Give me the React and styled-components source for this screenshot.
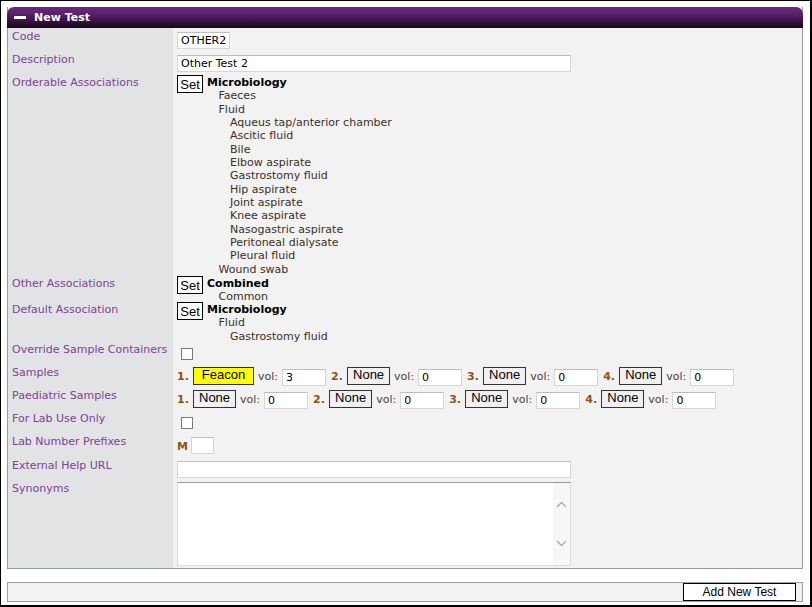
import React from 'react'
import styled, { createGlobalStyle } from 'styled-components'

const GlobalStyle = createGlobalStyle`
  html, body {
    margin: 0;
    padding: 0;
    background: #fff;
  }
  body {
    font-family: "DejaVu Sans", sans-serif;
    font-size: 11px;
  }
`

const Frame = styled.div`
  width: 812px;
  height: 607px;
  box-sizing: border-box;
  border: 1px solid #000;
  border-right-width: 2px;
  border-bottom-width: 2px;
  padding: 6px 7px 0 6px;
  background: #fff;
`

const Panel = styled.div`
  border: 1px solid #9a9a9a;
  border-top: none;
`

const Header = styled.div`
  height: 21px;
  margin: 0 -1px;
  border-radius: 7px 7px 0 0;
  background: linear-gradient(#6a2a7e 0%, #5a1f6a 35%, #35113d 70%, #150716 100%);
  display: flex;
  align-items: center;
  gap: 8px;
  padding-left: 7px;
  color: #fff;
  font-weight: bold;
  font-size: 11px;
`

const Dash = styled.span`
  width: 12px;
  height: 3px;
  background: #fff;
`

const Form = styled.div`
  display: grid;
  grid-template-columns: 165px 1fr;
`

const Label = styled.div`
  background: #e2e3e5;
  color: #7e4199;
  padding: 2px 4px 0 4px;
  line-height: 13.4px;
`

const Value = styled.div`
  background: #f2f2f2;
  padding: ${p => p.$pad || '4px 4px 2px'};
  height: ${p => (p.$h ? `${p.$h}px` : 'auto')};
  box-sizing: border-box;
  position: relative;
  z-index: ${p => (p.$h ? 1 : 0)};
`

const TextInput = styled.div`
  box-sizing: border-box;
  width: ${p => p.$w}px;
  height: 17px;
  background: #fff;
  border: 1px solid #d6d6d6;
  border-top-color: #bdbdbd;
  padding: 0 3px;
  font-size: 11px;
  line-height: 15px;
  color: #000;
  white-space: nowrap;
  overflow: hidden;
`

const AssocWrap = styled.div`
  display: flex;
  align-items: flex-start;
  gap: 4px;
`

const SetButton = styled.button`
  box-sizing: border-box;
  width: 26px;
  height: 18px;
  padding: 0;
  background: #fff;
  border: 1px solid #000;
  font-family: "Liberation Sans", Arial, sans-serif;
  font-size: 13px;
  line-height: 15px;
  color: #000;
`

const Tree = styled.div`
  padding-top: 1px;
  line-height: 13.33px;
`

const Node = styled.div`
  padding-left: ${p => p.$level * 11.5}px;
  font-weight: ${p => (p.$level === 0 ? 'bold' : 'normal')};
  color: ${p => (p.$level === 0 ? '#000' : '#3b3024')};
  white-space: nowrap;
`

const Check = styled.span`
  display: block;
  box-sizing: border-box;
  width: 12px;
  height: 12px;
  margin: 3px 0 0 4px;
  background: #fff;
  border: 1px solid #7a7a7a;
`

const SampleRow = styled.div`
  display: flex;
  align-items: center;
  height: 18px;
`

const Slot = styled.div`
  display: flex;
  align-items: center;
  margin-right: 5px;
`

const Num = styled.span`
  width: 16px;
  color: #8c5510;
  font-weight: bold;
`

const PickButton = styled.button`
  box-sizing: border-box;
  height: 18px;
  padding: 0 5px 2px;
  background: ${p => (p.$filled ? '#ffff00' : '#f0f0f0')};
  border: 1px solid #333;
  font-family: "Liberation Sans", Arial, sans-serif;
  font-size: 13px;
  line-height: 14px;
  color: #000;
  min-width: ${p => (p.$filled ? 61 : 43)}px;
`

const Vol = styled.span`
  margin: 1px 4px 0 4px;
  color: #4a4238;
`

const VolInput = styled(TextInput)`
  margin-top: 2px;
`

const Prefix = styled.div`
  display: flex;
  align-items: center;
  gap: 3px;
`

const PrefixLetter = styled.span`
  color: #8c5510;
  font-weight: bold;
  margin-top: 2px;
`

const TextArea = styled.div`
  box-sizing: border-box;
  width: 394px;
  height: 84px;
  background: #fff;
  border: 1px solid #dcdcdc;
  border-top-color: #9a9a9a;
  display: flex;
  justify-content: flex-end;
`

const ScrollBar = styled.div`
  width: 17px;
  background: #f7f7f7;
  display: flex;
  flex-direction: column;
  justify-content: space-between;
  align-items: center;
  padding: 18px 0 18px;
`

const Footer = styled.div`
  margin-top: 13px;
  height: 20px;
  box-sizing: border-box;
  border: 1px solid #a0a0a0;
  background: #f2f2f2;
  display: flex;
  justify-content: flex-end;
  padding-right: 6px;
`

const AddButton = styled.button`
  box-sizing: border-box;
  width: 113px;
  height: 18px;
  padding: 0;
  background: #fff;
  border: 1px solid #000;
  font-family: "Liberation Sans", Arial, sans-serif;
  font-size: 12px;
  color: #000;
`

const Chevron = ({ up }) => (
  <svg width="11" height="7" viewBox="0 0 11 7">
    <polyline
      points={up ? '1,6 5.5,1.5 10,6' : '1,1 5.5,5.5 10,1'}
      fill="none"
      stroke="#a8a8a8"
      strokeWidth="1.3"
    />
  </svg>
)

const orderable = [
  ['Microbiology', 0],
  ['Faeces', 1],
  ['Fluid', 1],
  ['Aqueus tap/anterior chamber', 2],
  ['Ascitic fluid', 2],
  ['Bile', 2],
  ['Elbow aspirate', 2],
  ['Gastrostomy fluid', 2],
  ['Hip aspirate', 2],
  ['Joint aspirate', 2],
  ['Knee aspirate', 2],
  ['Nasogastric aspirate', 2],
  ['Peritoneal dialysate', 2],
  ['Pleural fluid', 2],
  ['Wound swab', 1],
]

const other = [
  ['Combined', 0],
  ['Common', 1],
]

const defaults = [
  ['Microbiology', 0],
  ['Fluid', 1],
  ['Gastrostomy fluid', 2],
]

const samples = [
  { name: 'Feacon', vol: '3', filled: true },
  { name: 'None', vol: '0' },
  { name: 'None', vol: '0' },
  { name: 'None', vol: '0' },
]

const paediatric = [
  { name: 'None', vol: '0' },
  { name: 'None', vol: '0' },
  { name: 'None', vol: '0' },
  { name: 'None', vol: '0' },
]

function Association({ items }) {
  return (
    <AssocWrap>
      <SetButton>Set</SetButton>
      <Tree>
        {items.map(([name, level], i) => (
          <Node key={i} $level={level}>{name}</Node>
        ))}
      </Tree>
    </AssocWrap>
  )
}

function Samples({ list }) {
  return (
    <SampleRow>
      {list.map((s, i) => (
        <Slot key={i}>
          <Num>{i + 1}.</Num>
          <PickButton $filled={s.filled}>{s.name}</PickButton>
          <Vol>vol:</Vol>
          <VolInput $w={44}>{s.vol}</VolInput>
        </Slot>
      ))}
    </SampleRow>
  )
}

export default function App() {
  return (
    <Frame>
      <GlobalStyle />
      <Panel>
        <Header>
          <Dash />
          New Test
        </Header>
        <Form>
          <Label>Code</Label>
          <Value>
            <TextInput $w={53}>OTHER2</TextInput>
          </Value>

          <Label>Description</Label>
          <Value>
            <TextInput $w={394}>Other Test 2</TextInput>
          </Value>

          <Label>Orderable Associations</Label>
          <Value $pad="1px 4px 0" $h={201}>
            <Association items={orderable} />
          </Value>

          <Label>Other Associations</Label>
          <Value $pad="1px 4px 0" $h={26}>
            <Association items={other} />
          </Value>

          <Label>Default Association</Label>
          <Value $pad="1px 4px 0" $h={40}>
            <Association items={defaults} />
          </Value>

          <Label>Override Sample Containers</Label>
          <Value $pad="4px 4px 4px">
            <Check />
          </Value>

          <Label>Samples</Label>
          <Value $pad="3px 4px 2px">
            <Samples list={samples} />
          </Value>

          <Label>Paediatric Samples</Label>
          <Value $pad="3px 4px 2px">
            <Samples list={paediatric} />
          </Value>

          <Label>For Lab Use Only</Label>
          <Value $pad="4px 4px 4px">
            <Check />
          </Value>

          <Label>Lab Number Prefixes</Label>
          <Value $pad="4px 4px 3px">
            <Prefix>
              <PrefixLetter>M</PrefixLetter>
              <TextInput $w={23} />
            </Prefix>
          </Value>

          <Label>External Help URL</Label>
          <Value>
            <TextInput $w={394} />
          </Value>

          <Label>Synonyms</Label>
          <Value $pad="2px 4px 2px">
            <TextArea>
              <ScrollBar>
                <Chevron up />
                <Chevron />
              </ScrollBar>
            </TextArea>
          </Value>
        </Form>
      </Panel>
      <Footer>
        <AddButton>Add New Test</AddButton>
      </Footer>
    </Frame>
  )
}
